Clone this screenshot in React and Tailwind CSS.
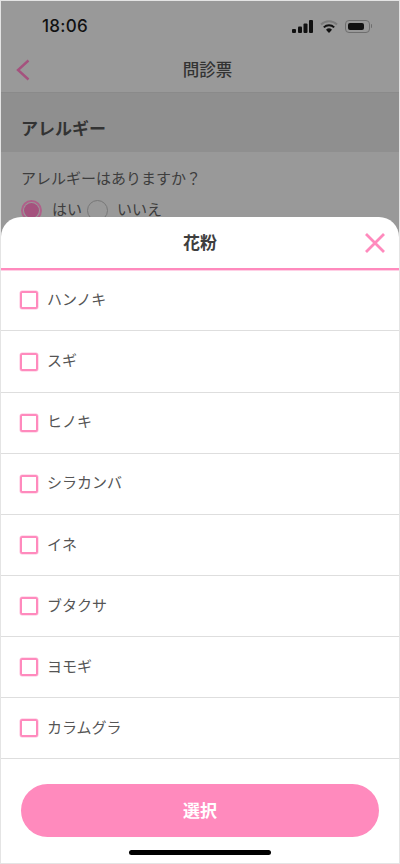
const FONT = '[font-family:"Liberation_Sans","Noto_Sans_CJK_JP",sans-serif]';

const items = ["ハンノキ", "スギ", "ヒノキ", "シラカンバ", "イネ", "ブタクサ", "ヨモギ", "カラムグラ"];

function StatusIcons() {
  return (
    <div className="flex items-center gap-[7px]">
      <svg width="21" height="13" viewBox="0 0 21 13" className="block">
        <rect x="0" y="9" width="4" height="4" rx="1" fill="#111" />
        <rect x="6" y="6.5" width="4" height="6.5" rx="1" fill="#111" />
        <rect x="11.5" y="3.5" width="4" height="9.5" rx="1" fill="#111" />
        <rect x="17" y="0" width="4" height="13" rx="1" fill="#111" />
      </svg>
      <svg width="18" height="13" viewBox="0 0 18 13" className="block">
        <path d="M1 4.5 A11.5 11.5 0 0 1 17 4.5" fill="none" stroke="#7c7c7c" strokeWidth="2" />
        <path d="M3.8 7.4 A7.5 7.5 0 0 1 14.2 7.4" fill="none" stroke="#111" strokeWidth="2" />
        <path d="M9 13 L6 9.8 A4.3 4.3 0 0 1 12 9.8 Z" fill="#111" />
      </svg>
      <div className="flex items-center">
        <div className="w-[25px] h-[13px] rounded-[4px] border border-[#6e6e6e] p-[2px]">
          <div className="w-[16px] h-full rounded-[2px] bg-[#111]" />
        </div>
        <div className="w-[1.5px] h-[4px] bg-[#6e6e6e] ml-[1px] rounded-r" />
      </div>
    </div>
  );
}

export default function App() {
  return (
    <div className={`${FONT} relative w-[400px] h-[864px] overflow-hidden bg-[#999999] border border-[#e4e4e4]`}>
      <div className="flex items-center justify-between h-[46px] pt-[4px] pl-[41px] pr-[27px]">
        <span className="text-[17px] font-medium text-[#111] leading-none tracking-[0.3px] [font-family:Inter,sans-serif]">18:06</span>
        <StatusIcons />
      </div>
      <div className="relative flex items-center justify-center h-[46px] pt-[2px] pl-[15px] border-b border-[#8a8a8a]">
        <svg width="14" height="22" viewBox="0 0 14 22" className="absolute left-[15px] top-[12px]">
          <path d="M12.5 1.5 L2 11 L12.5 20.5" fill="none" stroke="#a5527e" strokeWidth="2.4" />
        </svg>
        <span className="text-[16.5px] font-medium text-[#333]">問診票</span>
      </div>
      <div className="flex items-center h-[59px] pl-[20px] pt-[14px] bg-[#8f8f8f]">
        <span className="text-[17px] font-bold text-[#333]">アレルギー</span>
      </div>
      <div className="pl-[20px] pt-[16px]">
        <p className="text-[15px] leading-[20px] text-[#3d3d3d] mt-[1px]">アレルギーはありますか？</p>
        <div className="flex items-center mt-[10px] text-[15px] text-[#3d3d3d]">
          <div className="w-[21px] h-[21px] rounded-full border-2 border-[#b0608a] p-[1px]">
            <div className="w-full h-full rounded-full bg-[#a5527e]" />
          </div>
          <span className="ml-[10px]">はい</span>
          <div className="ml-[5px] w-[21px] h-[21px] rounded-full border border-[#777]" />
          <span className="ml-[9px]">いいえ</span>
        </div>
      </div>

      <div className="absolute left-0 right-0 top-[216px] bottom-0 bg-white rounded-t-[20px] flex flex-col">
        <div className="relative flex items-center justify-center h-[53px] pt-[3px] border-b-2 border-[#ff8abd] shadow-[0_1px_0_#ffd0e5] shrink-0">
          <span className="text-[17px] font-bold text-[#3e3e3e]">花粉</span>
          <svg width="20" height="20" viewBox="0 0 20 20" className="absolute right-[14px] top-[16px]">
            <path d="M1 1 L19 19 M19 1 L1 19" stroke="#ff8abd" strokeWidth="2.8" fill="none" />
          </svg>
        </div>
        <div className="h-[0.4px] shrink-0" />
        {items.map((t) => (
          <div key={t} className="flex items-center h-[61.1px] shrink-0 pl-[19px] border-b border-[#dedede]">
            <div className="w-[18px] h-[18px] rounded-[2px] border-2 border-[#ff8abd] shadow-[0_0_0_0.5px_#ffc0dc]" />
            <span className="ml-[9px] text-[15px] text-[#555]">{t}</span>
          </div>
        ))}
        <button className="mt-[25px] mx-[20px] h-[52.5px] pt-[2px] rounded-full bg-[#ff8abd] text-white text-[17px] font-bold shrink-0">
          選択
        </button>
        <div className="mt-[13px] self-center w-[142px] h-[5px] rounded-full bg-black shrink-0" />
      </div>
    </div>
  );
}
